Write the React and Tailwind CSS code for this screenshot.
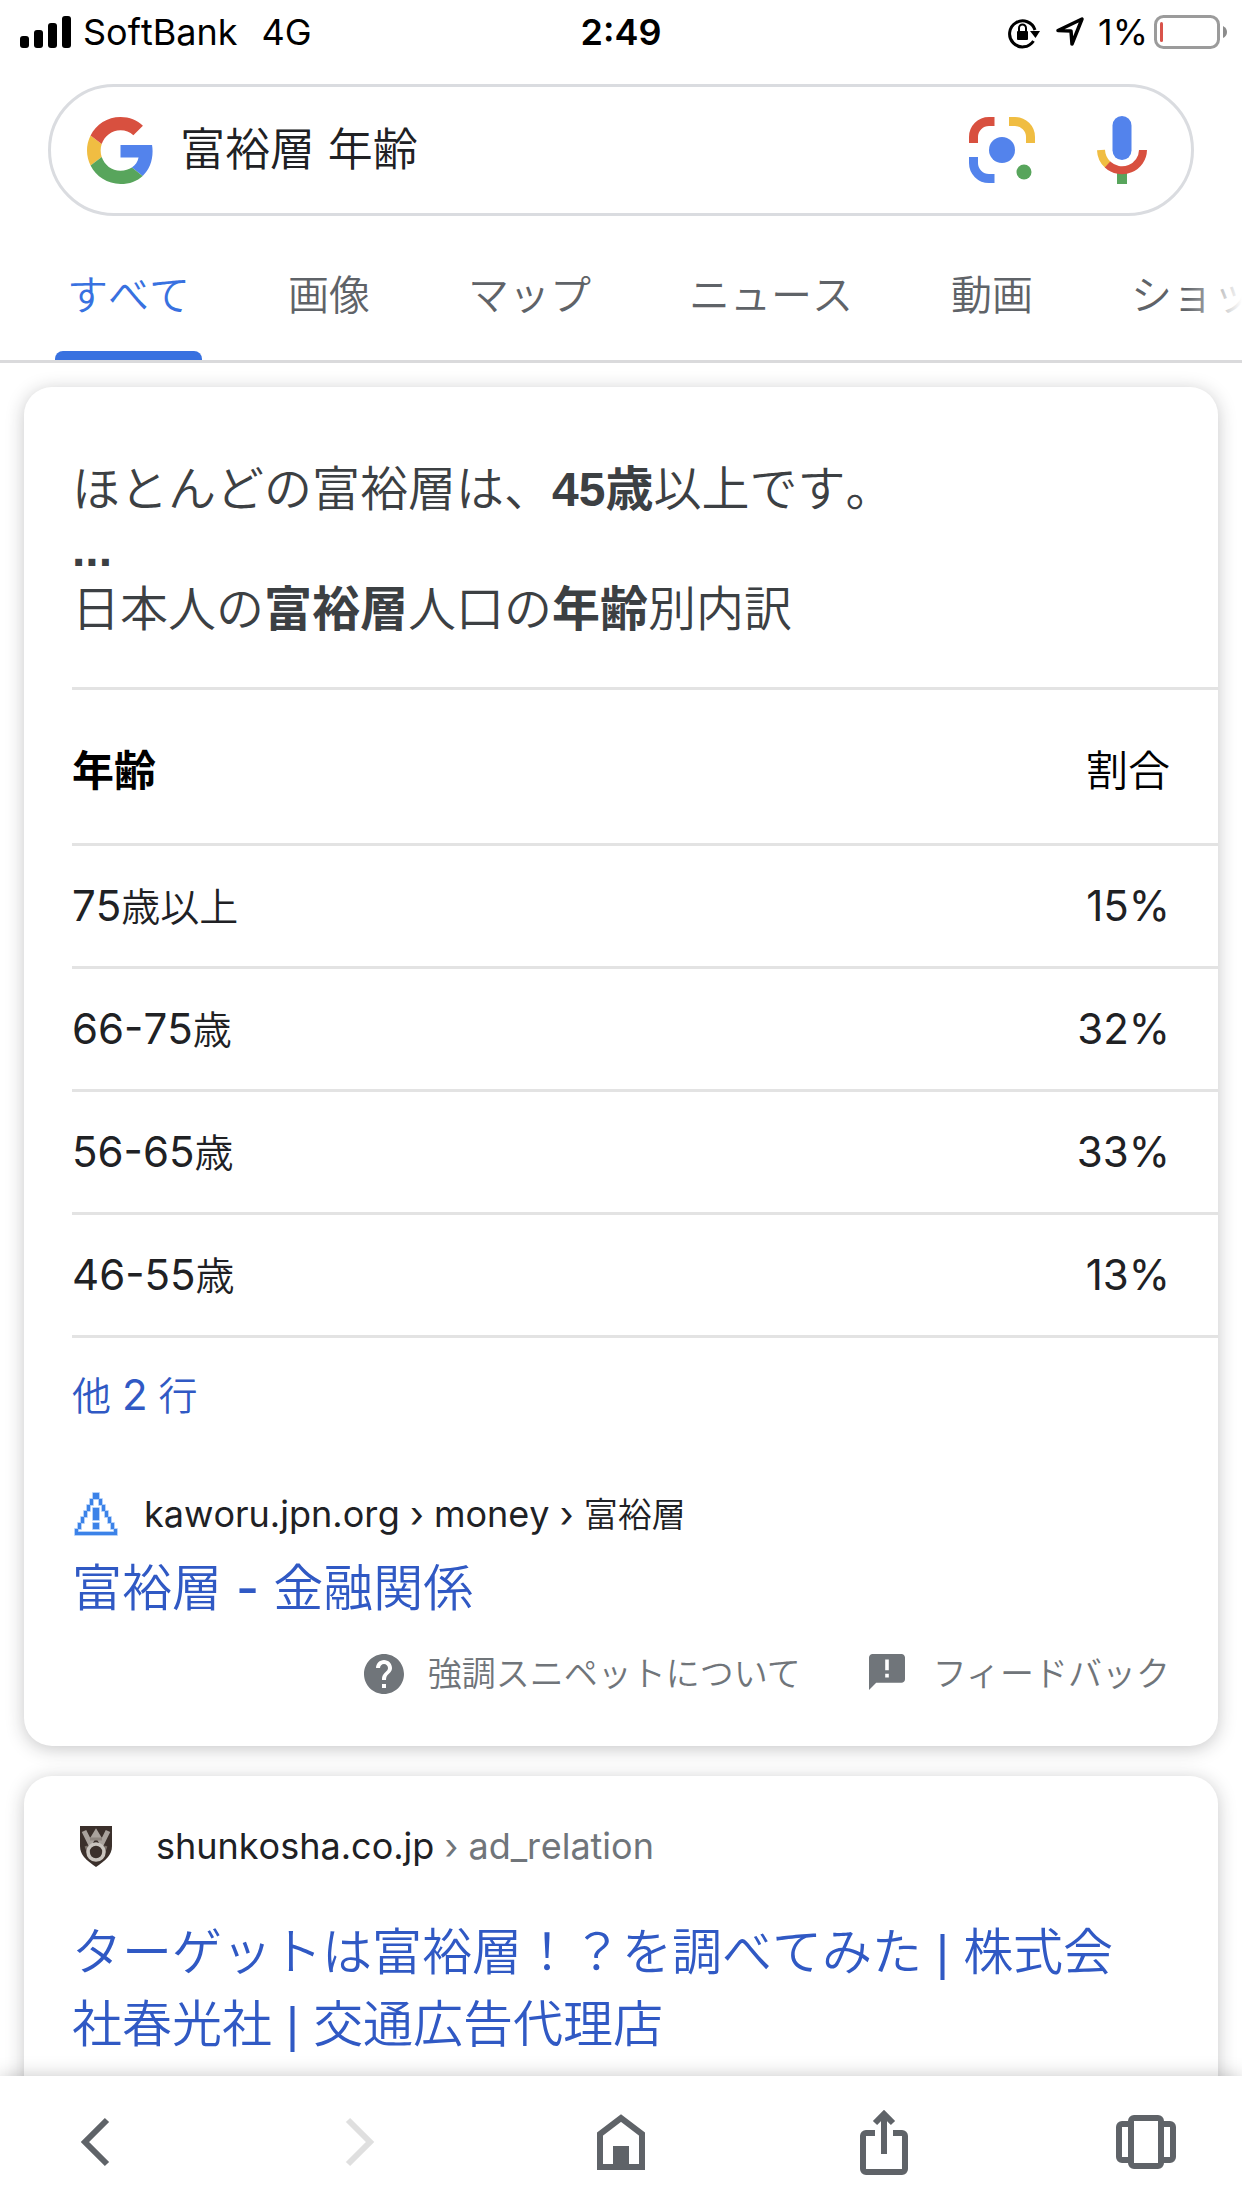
import React from "react";

const rows = [
  ["75", "歳以上", "15%"],
  ["66-75", "歳", "32%"],
  ["56-65", "歳", "33%"],
  ["46-55", "歳", "13%"],
];
const tabs = ["画像", "マップ", "ニュース", "動画", "ショッピング"];

function StatusBar() {
  return (
    <div className="grid h-16 shrink-0 grid-cols-[1fr_auto_1fr] items-center px-5 font-['Inter',sans-serif] text-[36px] leading-10 font-normal text-black">
      <div className="flex items-center">
        <svg className="h-8 w-[51px]" viewBox="0 0 51 32" aria-hidden="true">
          <rect x="0" y="20" width="9" height="12" rx="3" />
          <rect x="14" y="14" width="9" height="18" rx="3" />
          <rect x="28" y="7" width="9" height="25" rx="3" />
          <rect x="42" y="0" width="9" height="32" rx="3" />
        </svg>
        <span className="ml-3">SoftBank</span>
        <span className="ml-6">4G</span>
      </div>
      <span className="font-semibold">2:49</span>
      <div className="-mr-1.5 flex items-center justify-end">
        <svg className="h-9 w-8" viewBox="0 0 32 36" fill="none" aria-hidden="true">
          <path d="M25.5 27A13 13 0 1 1 27 16" stroke="#000" strokeWidth="3" />
          <path d="M22 17h10l-4.500 7z" fill="#000" />
          <rect x="9" y="17" width="11" height="9" rx="1" fill="#000" />
          <path d="M11 18v-4a3.500 3.500 0 0 1 7 0v4" stroke="#000" strokeWidth="2" />
        </svg>
        <svg className="ml-4 h-8 w-8" viewBox="0 0 32 32" fill="none" aria-hidden="true">
          <path d="M2 14.500L26 3 16 28l-1-13z" stroke="#000" strokeWidth="3.500" strokeLinejoin="round" />
        </svg>
        <span className="ml-2.5">1%</span>
        <svg className="ml-1.5 h-[34px] w-[74px]" viewBox="0 0 74 34" fill="none" aria-hidden="true">
          <rect x="1.500" y="1.500" width="63" height="31" rx="8" stroke="#9b9b9b" strokeWidth="3" />
          <rect x="6" y="7" width="3" height="20" rx="1.500" fill="#d9534a" />
          <path d="M69 11q4 2 4 6t-4 6z" fill="#8c8c8c" />
        </svg>
      </div>
    </div>
  );
}

function GoogleLogo() {
  return (
    <svg className="size-[67px] shrink-0" viewBox="0 0 48 48" role="img" aria-label="Google">
      <path fill="#f0bd42" d="M10.530 28.590A14.500 14.500 0 0 1 9.770 24c0-1.600.27-3.140.76-4.590l-7.980-6.190A23.900 23.900 0 0 0 0 24c0 3.880.92 7.540 2.560 10.780z" />
      <path fill="#d8503f" d="M24 9.500c3.540 0 6.710 1.220 9.210 3.600l6.850-6.850C35.900 2.380 30.470 0 24 0 14.620 0 6.510 5.380 2.560 13.220l7.980 6.190C12.430 13.720 17.740 9.500 24 9.500z" />
      <path fill="#5383ec" d="M46.980 24.550c0-1.570-.15-3.090-.38-4.550H24v9.020h12.940c-.58 2.960-2.260 5.480-4.780 7.180l7.730 6c4.510-4.180 7.090-10.360 7.090-17.650z" />
      <path fill="#58a55c" d="M24 48c6.480 0 11.930-2.130 15.890-5.810l-7.730-6c-2.150 1.450-4.920 2.300-8.160 2.300-6.260 0-11.570-4.220-13.470-9.910l-7.980 6.190C6.510 42.620 14.620 48 24 48z" />
    </svg>
  );
}

function SearchBox() {
  return (
    <form className="mx-12 mt-5 flex h-[132px] shrink-0 items-center rounded-full border-3 border-[#dadce0] pl-9 pr-11" onSubmit={(e) => e.preventDefault()}>
      <GoogleLogo />
      <input aria-label="検索" defaultValue="富裕層 年齢" className="ml-[26px] min-w-0 flex-1 bg-transparent text-[45px] leading-[60px] text-[#202124] outline-none" />
      <button type="button" aria-label="画像で検索">
        <svg className="size-[66px]" viewBox="0 0 66 66" fill="none">
          <path d="M4.500 26V20A15.500 15.500 0 0 1 20 4.500h5.500" stroke="#d8503f" strokeWidth="9" />
          <path d="M40 4.500h6A15.500 15.500 0 0 1 61.500 20v6" stroke="#f0bd42" strokeWidth="9" />
          <path d="M4.500 40v6A15.500 15.500 0 0 0 20 61.500h5.500" stroke="#5383ec" strokeWidth="9" />
          <circle cx="33" cy="33" r="13" fill="#5383ec" />
          <circle cx="55" cy="55" r="7.500" fill="#58a55c" />
        </svg>
      </button>
      <button type="button" aria-label="音声検索" className="ml-[62px]">
        <svg className="h-[68px] w-[50px]" viewBox="0 0 50 68" fill="none">
          <rect x="15.500" y="0" width="19" height="44" rx="9.500" fill="#5383ec" />
          <rect x="20" y="56" width="10" height="12" fill="#58a55c" />
          <path d="M4 34a21 21 0 0 0 7 15" stroke="#f0bd42" strokeWidth="8" />
          <path d="M46 34A21 20.500 0 0 1 10.500 48.500" stroke="#d8503f" strokeWidth="8" />
        </svg>
      </button>
    </form>
  );
}

function Tabs() {
  return (
    <nav className="relative mt-5 flex h-[127px] shrink-0 gap-[98px] overflow-hidden whitespace-nowrap border-b-3 border-[#dadadc] pl-[67px] text-[41px] leading-[118px] text-[#5f6368]">
      <a href="#all" aria-current="page" className="relative text-[#3871e0]">
        すべて
        <span className="absolute -inset-x-3 bottom-0 h-[9px] rounded-t-lg bg-[#3871e0]" />
      </a>
      {tabs.map((t) => (
        <a href="#tab" key={t}>{t}</a>
      ))}
      <span className="absolute inset-y-0 right-0 w-14 bg-linear-to-r from-white/0 to-white" />
    </nav>
  );
}

const card = "rounded-[28px] bg-white pl-12 shadow-[0_3px_18px_rgba(32,33,36,0.25)]";
const bold = "font-['Liberation_Sans','Noto_Sans_CJK_JP',sans-serif] leading-none font-bold";
const title = "text-[50px] leading-[72px] text-[#3059c4]";

function Bar() {
  return <span className="font-['Liberation_Sans',sans-serif] leading-none font-normal">|</span>;
}

function Snippet() {
  return (
    <section className={card}>
      <p className="pt-[72px] text-[48px] leading-[60px] text-[#3c4043]">
        ほとんどの富裕層は、<b className={bold}>45歳</b>以上です。
        <br />
        <b className={bold}>...</b>
        <br />
        日本人の<b className={bold}>富裕層</b>人口の<b className={bold}>年齢</b>別内訳
      </p>
      <table className="mt-12 w-full border-collapse text-[42px] leading-[60px] text-[#202124]">
        <thead>
          <tr className="h-[156px] border-y-3 border-[#e3e3e3] text-black">
            <th scope="col" className="pt-2 text-left font-bold">年齢</th>
            <th scope="col" className="pt-2 pr-12 text-right font-[350]">割合</th>
          </tr>
        </thead>
        <tbody>
          {rows.map(([age, unit, share]) => (
            <tr key={age} className="h-[123px] border-b-3 border-[#e3e3e3]">
              <td className="font-normal">{age}<span className="text-[39px] leading-none font-[350]">{unit}</span></td>
              <td className="pr-12 text-right font-normal">{share}</td>
            </tr>
          ))}
        </tbody>
      </table>
      <a href="#more" className="mt-7 block text-[39px] leading-[60px] text-[#3059c4]">他 <span className="text-[42px] leading-none font-normal">2</span> 行</a>
      <a href="#kaworu" className="mt-[58px] block">
        <span className="flex items-center text-[36px] leading-[60px] font-normal text-[#202124]">
          <svg className="mr-6 size-12" viewBox="0 0 16 16" fill="#3b82e8" stroke="#9cc2f7" strokeWidth="0.5" paintOrder="stroke" aria-hidden="true">
            <path d="M7 1h2v2H7zM6 3h1v2H6zM9 3h1v2H9zM5 5h1v2H5zM10 5h1v2h-1zM4 7h1v2H4zM11 7h1v2h-1zM3 9h1v2H3zM12 9h1v2h-1zM2 11h1v2H2zM13 11h1v2h-1zM1 13h1v1h13v1H1zM14 13h1v1h-1zM7 6h2v4H7zM7 11h2v2H7z" />
          </svg>
          <span>kaworu.jpn.org › money › <span className="text-[34px] leading-none font-[350]">富裕層</span></span>
        </span>
        <h3 className={title + " mt-2"}>富裕層 <span className="font-medium">-</span> 金融関係</h3>
      </a>
      <div className="mt-5 flex items-center justify-end pb-[42px] pr-12 text-[34px] leading-[60px] text-[#70757a] [font-kerning:auto]">
        <a href="#about" className="flex items-center">
          <svg className="mr-6 size-10" viewBox="2 2 20 20" fill="#70757a" aria-hidden="true">
            <path d="M12 2C6.480 2 2 6.480 2 12s4.480 10 10 10 10-4.480 10-10S17.520 2 12 2zm1 17h-2v-2h2v2zm2.070-7.750l-.9.920C13.450 12.900 13 13.500 13 15h-2v-.5c0-1.100.45-2.100 1.170-2.830l1.240-1.260c.37-.36.59-.86.59-1.410 0-1.100-.9-2-2-2s-2 .9-2 2H8c0-2.210 1.790-4 4-4s4 1.790 4 4c0 .88-.36 1.680-.93 2.250z" />
          </svg>
          強調スニペットについて
        </a>
        <a href="#feedback" className="ml-[68px] flex items-center">
          <svg className="mr-7 mb-1 size-9" viewBox="2 2 20 20" fill="#70757a" aria-hidden="true">
            <path d="M20 2H4c-1.100 0-1.990.9-1.990 2L2 22l4-4h14c1.100 0 2-.9 2-2V4c0-1.100-.9-2-2-2zm-7 13h-2v-2h2v2zm0-4h-2V5h2v6z" />
          </svg>
          フィードバック
        </a>
      </div>
    </section>
  );
}

function Result() {
  return (
    <section className={card + " mt-[30px] pb-16 pr-16 pt-10"}>
      <a href="#shunkosha">
        <span className="flex items-center text-[36px] leading-[60px] font-normal text-[#202124]">
          <svg className="mr-9 size-12" viewBox="0 0 48 48" fill="none" aria-hidden="true">
            <path d="M8 4h32v20c0 9-6 14-16 21C14 38 8 33 8 24z" fill="#3b302b" />
            <path d="M12 9l6 12 6-10 6 10 6-12" stroke="#a9a29c" strokeWidth="5" />
            <path d="M14 24l3 8M34 24l-3 8" stroke="#7c726b" strokeWidth="3" />
            <circle cx="24" cy="30" r="8" stroke="#c9c4be" strokeWidth="3.500" />
            <path d="M18 17h12" stroke="#8d857e" strokeWidth="3" />
          </svg>
          <span>shunkosha.co.jp <span className="text-[#70757a]">› ad_relation</span></span>
        </span>
        <h3 className={title + " mt-10"}>ターゲットは富裕層！？を調べてみた <Bar /> 株式会社春光社 <Bar /> 交通広告代理店</h3>
      </a>
    </section>
  );
}

function Toolbar() {
  const btn = "flex size-[60px] items-center justify-center";
  const svg = { viewBox: "0 0 60 66", fill: "none", stroke: "#5f6368", strokeWidth: 6, className: "h-[66px] w-[60px] shrink-0" };
  return (
    <nav className="relative flex h-[132px] shrink-0 items-center justify-between bg-white px-[66px] shadow-[0_0_18px_rgba(0,0,0,0.22)]">
      <button aria-label="戻る" className={btn}>
        <svg {...svg}><path d="M41 11L19 33l22 22" /></svg>
      </button>
      <button aria-label="進む" disabled className={btn}>
        <svg {...svg} stroke="#dfdfdf"><path d="M19 11l22 22-22 22" /></svg>
      </button>
      <button aria-label="ホーム" className={btn}>
        <svg {...svg}><path d="M9 58V25L30 9l21 16v33z" /><path d="M22 37h16v21H22z" fill="#5f6368" stroke="none" /></svg>
      </button>
      <button aria-label="共有" className={btn}>
        <svg {...svg}><path d="M21 24H12a3 3 0 0 0-3 3v33a3 3 0 0 0 3 3h36a3 3 0 0 0 3-3V27a3 3 0 0 0-3-3h-9M30 45V5M21 14l9-9 9 9" /></svg>
      </button>
      <button aria-label="タブ" className={btn}>
        <svg {...svg}><rect x="15" y="9" width="30" height="48" rx="3" /><path d="M15 15H6a3 3 0 0 0-3 3v30a3 3 0 0 0 3 3h9M45 15h9a3 3 0 0 1 3 3v30a3 3 0 0 1-3 3h-9" /></svg>
      </button>
    </nav>
  );
}

export default function App() {
  return (
    <div lang="ja" className="flex h-screen flex-col overflow-hidden bg-white font-['Inter','Noto_Sans_CJK_JP',sans-serif] font-[350] [font-kerning:none]">
      <StatusBar />
      <SearchBox />
      <Tabs />
      <main className="min-h-0 flex-1 overflow-y-auto px-6 pt-6 [scrollbar-width:none]">
        <Snippet />
        <Result />
      </main>
      <Toolbar />
    </div>
  );
}
